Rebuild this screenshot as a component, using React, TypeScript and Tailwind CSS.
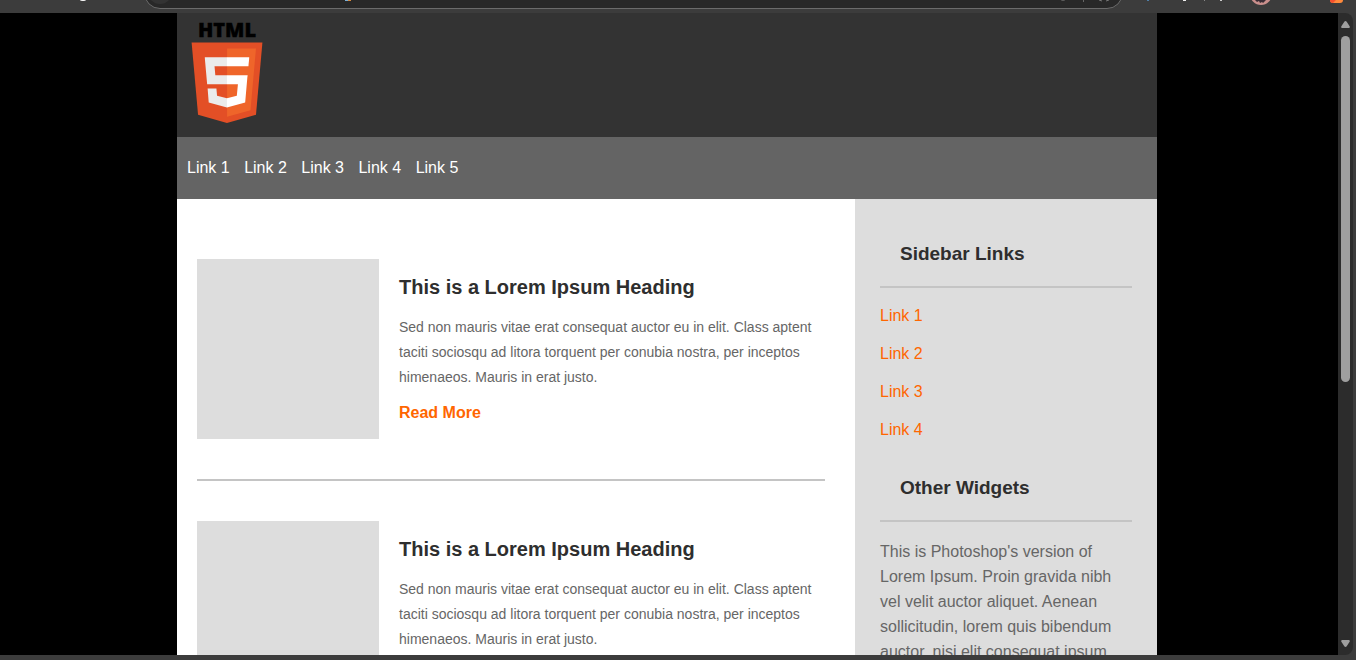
import React from "react";

const navLinks = ["Link 1", "Link 2", "Link 3", "Link 4", "Link 5"];
const sidebarLinks = ["Link 1", "Link 2", "Link 3", "Link 4"];
const articles = [1, 2, 3];

function Html5Logo() {
  return (
    <svg className="block h-[100px] w-20 overflow-visible" viewBox="0 0 80 100" role="img" aria-label="HTML5">
      <text
        x="40"
        y="14"
        textAnchor="middle"
        fontFamily="'Open Sans', Inter, 'Liberation Sans', sans-serif"
        fontWeight="800"
        fontSize="20"
        fill="#000"
        stroke="#000"
        strokeWidth="0.4"
      >
        HTML
      </text>
      <g transform="translate(-0.1 19.6) scale(0.157)">
        <path fill="#e34f26" d="M71 460L30 0h451l-41 460-185 52z" />
        <path fill="#ef652a" d="M256 472l149-41 35-394H256z" />
        <path
          fill="#ebebeb"
          d="M256 208h-75l-5-58h80V94H114l1 15 14 156h127zM256 355l-1 0-63-17-4-45h-56l7 89 116 32h1z"
        />
        <path
          fill="#fff"
          d="M255 208v57h70l-7 73-63 17v59l116-32 1-10 13-149 2-15zM255 94v56h137l1-12 3-29 1-15z"
        />
      </g>
    </svg>
  );
}

function BrowserBar() {
  return (
    <div className="flex h-[13px] shrink-0 items-end overflow-hidden bg-[#3c3c3c]">
      <svg className="h-[13px] w-36 shrink-0" viewBox="0 0 144 13" aria-hidden="true">
        <ellipse cx="83" cy="-1" rx="3.5" ry="2" fill="#fff" />
      </svg>
      <div className="mb-1 flex h-8 min-w-0 flex-1 items-end justify-between rounded-full border border-[#6b6b6b] bg-[#282828]">
        <svg className="h-[30px] w-60 shrink-0" viewBox="0 0 240 30" aria-hidden="true">
          <circle cx="15" cy="14" r="12" fill="#333" />
          <rect x="200" y="20" width="3" height="3" fill="#7ab0d8" />
          <rect x="203" y="20" width="3" height="3" fill="#d98a3d" />
        </svg>
        <svg className="h-[30px] w-20 shrink-0" viewBox="0 0 80 30" aria-hidden="true">
          <circle cx="21" cy="19" r="3.5" fill="#8a8a8a" />
          <path d="M41.5 15v9" stroke="#666" />
          <path d="M57 22l3 1M64 23l3-1" stroke="#777" />
        </svg>
      </div>
      <svg className="h-[13px] w-[233px] shrink-0" viewBox="0 0 233 13" aria-hidden="true">
        <rect x="24" y="0" width="2" height="1" fill="#4f7fa8" />
        <rect x="60" y="0" width="3" height="1" fill="#eee" />
        <rect x="81" y="0" width="1" height="1" fill="#888" />
        <rect x="97" y="0" width="2" height="1" fill="#ccc" />
        <circle cx="138" cy="-6" r="11" fill="#c98f8c" />
        <path d="M132 0l2 2 2-1 1 2 2-1 1 1 3-3z" fill="#3a2c35" />
        <path d="M207 0h13q0 3-3 3h-7q-3 0-3-3z" fill="#ff8a3c" />
        <path d="M207 0h6l-3 3q-3 0-3-3z" fill="#f4502f" />
      </svg>
    </div>
  );
}

function ScrollTrack() {
  return (
    <div className="flex w-[15px] shrink-0 flex-col items-center rounded-r-lg bg-[#2c2c2c] pt-2 pb-2" aria-hidden="true">
      <svg className="h-[7px] w-[9px] shrink-0" viewBox="0 0 9 7">
        <path d="M4.5 0Q5.2 0 5.7.8L8.8 5.5Q9 7 8 7H1Q0 7 .2 5.5L3.3.8Q3.8 0 4.5 0z" fill="#9f9f9f" />
      </svg>
      <div className="mt-2 flex w-[9px] flex-1 flex-col">
        <div className="h-[58%] rounded-full bg-[#9f9f9f]" />
      </div>
      <svg className="mt-2 h-[7px] w-[9px] shrink-0" viewBox="0 0 9 7">
        <path d="M4.5 7Q5.2 7 5.7 6.2L8.8 1.5Q9 0 8 0H1Q0 0 .2 1.5L3.3 6.2Q3.8 7 4.5 7z" fill="#9f9f9f" />
      </svg>
    </div>
  );
}

function Article() {
  return (
    <article className="mb-10 flex gap-5 border-b-2 border-[#c4c4c4] pb-10">
      <div className="h-[180px] w-[182px] shrink-0 bg-[#ddd]" />
      <div className="min-w-0 flex-1 pt-4">
        <h2 className="mb-4 text-[20px] leading-6 font-bold text-[#2e2e2e]">This is a Lorem Ipsum Heading</h2>
        <p className="mb-[10px] text-[14px] leading-[25px] text-[#666]">
          Sed non mauris vitae erat consequat auctor eu in elit. Class aptent taciti sociosqu ad litora torquent per
          conubia nostra, per inceptos himenaeos. Mauris in erat justo.
        </p>
        <a href="#" className="block text-[16px] leading-[25px] font-bold text-[#ff6600]">
          Read More
        </a>
      </div>
    </article>
  );
}

function Sidebar() {
  const heading = "border-b-2 border-[#c4c4c4] pb-5 pl-5 text-[19px] leading-6 font-bold text-[#2e2e2e]";
  return (
    <aside className="w-[302px] shrink-0 bg-[#ddd] px-[25px] pt-[43px] pb-10">
      <h3 className={heading}>Sidebar Links</h3>
      <ul className="mt-[9px]">
        {sidebarLinks.map((label) => (
          <li key={label} className="text-[16px] leading-[38px]">
            <a href="#" className="text-[#ff6600]">
              {label}
            </a>
          </li>
        ))}
      </ul>
      <h3 className={`mt-[27px] ${heading}`}>Other Widgets</h3>
      <p className="mt-[17px] text-[16px] leading-[25px] text-[#666]">
        This is Photoshop's version of Lorem Ipsum. Proin gravida nibh vel velit auctor aliquet. Aenean sollicitudin,
        lorem quis bibendum auctor, nisi elit consequat ipsum.
      </p>
    </aside>
  );
}

export default function App() {
  return (
    <div className="flex h-screen flex-col bg-[#3c3c3c] font-['Liberation_Sans',Arial,sans-serif]">
      <BrowserBar />
      <div className="flex min-h-0 flex-1 pr-[3px]">
        <div className="min-w-0 flex-1 overflow-x-hidden overflow-y-auto bg-black pr-1 [scrollbar-width:none]">
          <div className="mx-auto max-w-[980px] bg-white">
            <header className="bg-[#333] px-[10px] pt-[10px] pb-[14px]">
              <Html5Logo />
            </header>
            <nav className="bg-[#646464] px-[10px] py-[18px] text-[16px] leading-[26px] text-white">
              {navLinks.map((label) => (
                <React.Fragment key={label}>
                  <a href="#" className="mr-[10px]">
                    {label}
                  </a>{" "}
                </React.Fragment>
              ))}
            </nav>
            <div className="flex">
              <main className="min-w-0 flex-1 pt-[60px] pr-[30px] pl-5">
                {articles.map((id) => (
                  <Article key={id} />
                ))}
              </main>
              <Sidebar />
            </div>
          </div>
        </div>
        <ScrollTrack />
      </div>
      <div className="h-[5px] shrink-0 bg-[#3c3c3c]" />
    </div>
  );
}
